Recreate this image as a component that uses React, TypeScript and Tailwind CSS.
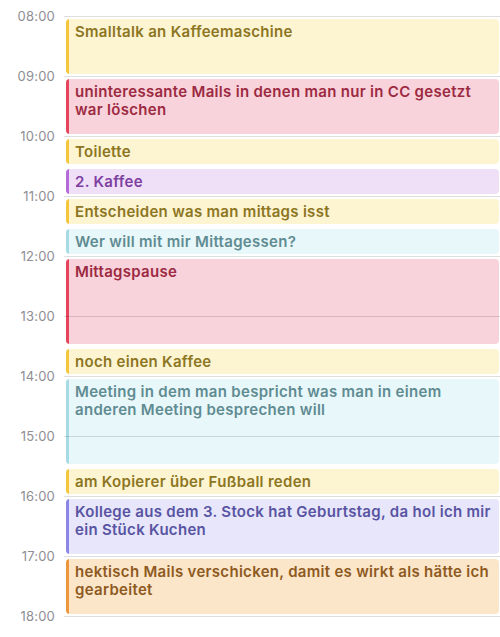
const hours = ["08:00", "09:00", "10:00", "11:00", "12:00", "13:00", "14:00", "15:00", "16:00", "17:00", "18:00"];

type Tone = "yellow" | "red" | "purple" | "cyan" | "indigo" | "orange";

interface CalendarEvent {
    start: number; // hours since 08:00
    duration: number; // hours
    title: string;
    tone: Tone;
}

const events: CalendarEvent[] = [
    { start: 0, duration: 1, title: "Smalltalk an Kaffeemaschine", tone: "yellow" },
    { start: 1, duration: 1, title: "uninteressante Mails in denen man nur in CC gesetzt war löschen", tone: "red" },
    { start: 2, duration: 0.5, title: "Toilette", tone: "yellow" },
    { start: 2.5, duration: 0.5, title: "2. Kaffee", tone: "purple" },
    { start: 3, duration: 0.5, title: "Entscheiden was man mittags isst", tone: "yellow" },
    { start: 3.5, duration: 0.5, title: "Wer will mit mir Mittagessen?", tone: "cyan" },
    { start: 4, duration: 1.5, title: "Mittagspause", tone: "red" },
    { start: 5.5, duration: 0.5, title: "noch einen Kaffee", tone: "yellow" },
    { start: 6, duration: 1.5, title: "Meeting in dem man bespricht was man in einem anderen Meeting besprechen will", tone: "cyan" },
    { start: 7.5, duration: 0.5, title: "am Kopierer über Fußball reden", tone: "yellow" },
    { start: 8, duration: 1, title: "Kollege aus dem 3. Stock hat Geburtstag, da hol ich mir ein Stück Kuchen", tone: "indigo" },
    { start: 9, duration: 1, title: "hektisch Mails verschicken, damit es wirkt als hätte ich gearbeitet", tone: "orange" },
];

const toneClasses: Record<Tone, { box: string; bar: string; text: string }> = {
    yellow: { box: "bg-[#fdf4d2]", bar: "bg-[#f3c63c]", text: "text-[#8c7622]" },
    red: { box: "bg-[#f9d3db]", bar: "bg-[#e6435c]", text: "text-[#9c2a42]" },
    purple: { box: "bg-[#efe0f8]", bar: "bg-[#b46bd9]", text: "text-[#7e3fa1]" },
    cyan: { box: "bg-[#e8f7f9]", bar: "bg-[#a6dbe5]", text: "text-[#5f8b92]" },
    indigo: { box: "bg-[#e7e6fb]", bar: "bg-[#8c87e6]", text: "text-[#5854a2]" },
    orange: { box: "bg-[#fbe6c9]", bar: "bg-[#ee963b]", text: "text-[#8e5a1f]" },
};

const HOUR = 60;

export default function App() {
    return (
        <div className="min-h-screen bg-white pt-[16px] font-['Inter','Liberation_Sans',sans-serif]">
            <div className="relative">
                {/* Events sit on the time axis, the grid lines run over them */}
                <div className="absolute inset-0 left-[66px] right-[1px]">
                    {events.map((ev, i) => {
                        const t = toneClasses[ev.tone];
                        return (
                            <div
                                key={i}
                                className={`absolute left-0 right-0 flex overflow-hidden rounded-[4px] ${t.box}`}
                                style={{ top: ev.start * HOUR + 3, height: ev.duration * HOUR - 5 }}
                            >
                                <div className={`w-[3px] shrink-0 ${t.bar}`} />
                                <p className={`pl-[6px] pr-[5px] pt-[4px] text-[15px] leading-[18px] tracking-[0.3px] font-semibold ${t.text}`}>{ev.title}</p>
                            </div>
                        );
                    })}
                </div>

                {hours.map((h, i) => (
                    <div key={h} className={`relative flex ${i === hours.length - 1 ? "h-[21px]" : "h-[60px]"}`}>
                        <div className="w-[64px] shrink-0 pr-[9px] -mt-[8px] text-right text-[13px] leading-[16px] tracking-[0.2px] text-[#8e8e93]">{h}</div>
                        <div className="flex-1 border-t border-[rgba(0,0,0,0.13)]" />
                    </div>
                ))}
            </div>
        </div>
    );
}
